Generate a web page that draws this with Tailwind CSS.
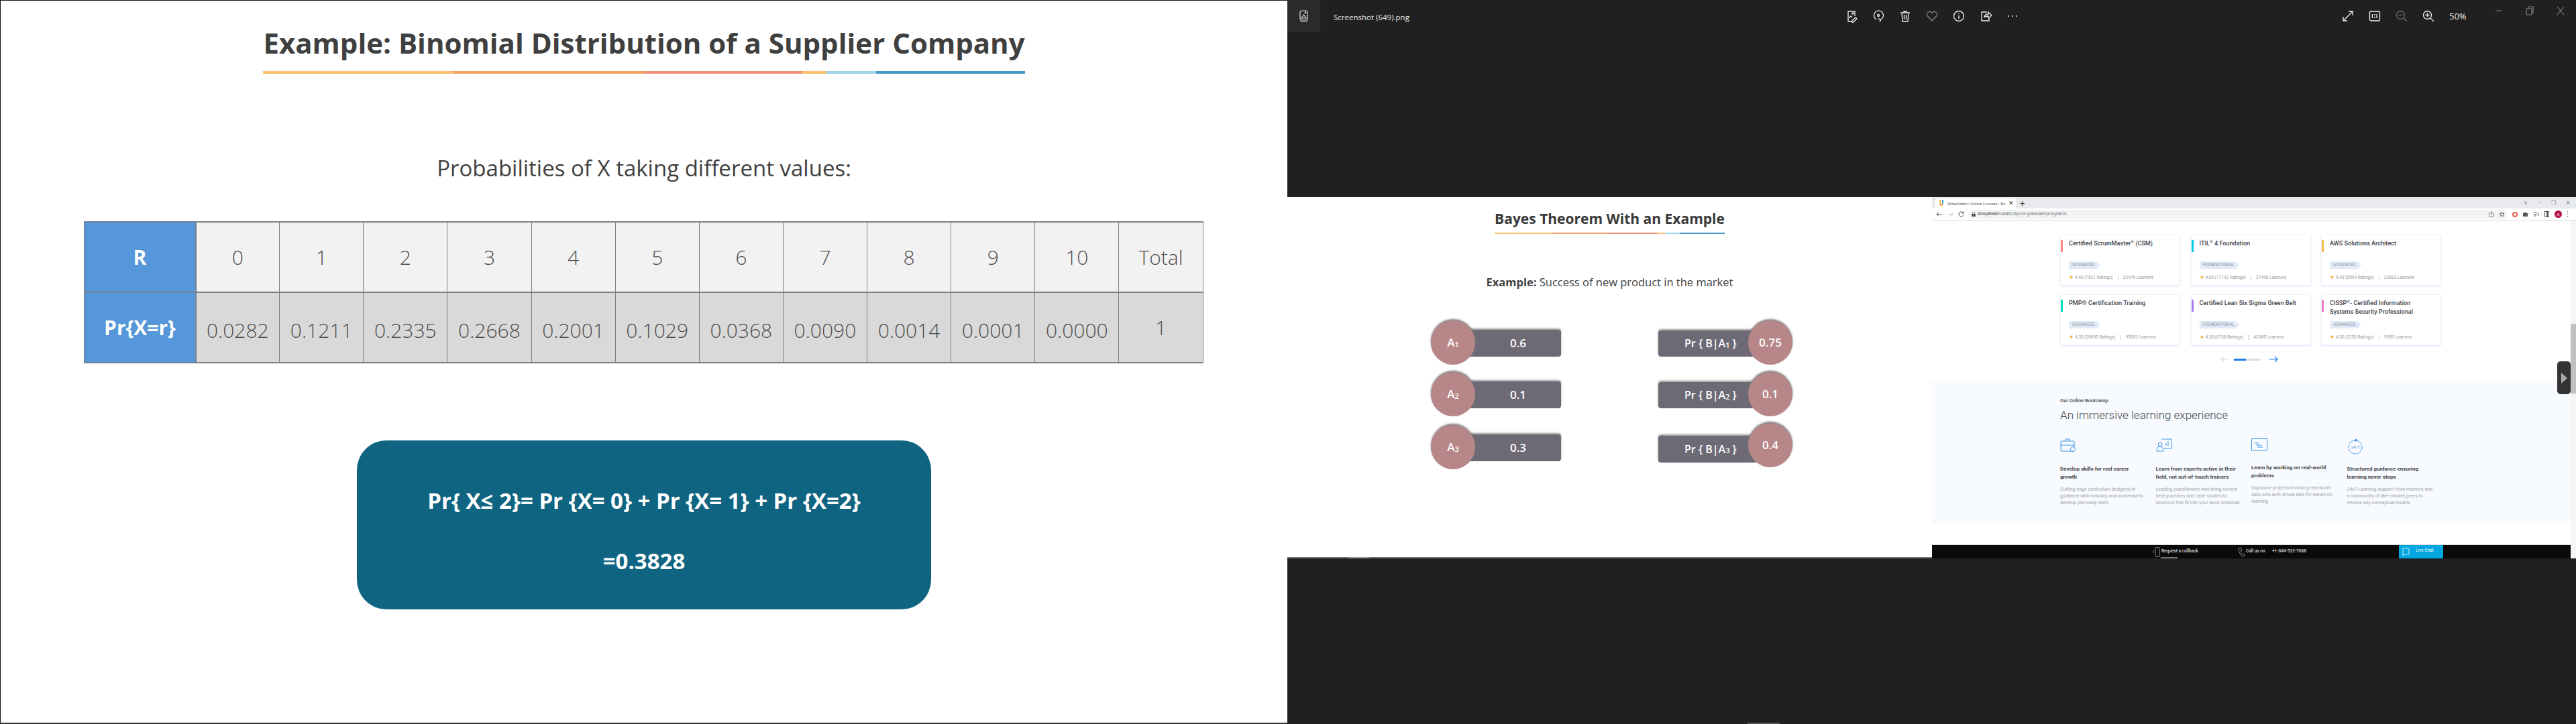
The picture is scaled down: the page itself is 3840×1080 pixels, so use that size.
<!DOCTYPE html>
<html lang="en">
<head>
<meta charset="UTF-8">
<title>Photos viewer</title>
<script src="https://cdn.jsdelivr.net/npm/@tailwindcss/browser@4"></script>
</head>
<body class="w-[3840px] h-[1080px] overflow-hidden flex bg-[#202020] font-['Open_Sans',sans-serif]">

<!-- Left slide -->
<div class="w-[1919px] h-[1080px] shrink-0 bg-white border-t border-l border-[#111] border-b-2 border-b-[#3a3a3a] flex flex-col items-center">
  <div class="mt-[35px] flex flex-col w-max">
    <h1 class="text-[42px] leading-[56px] font-bold text-[#3f3f3f] w-max">Example: Binomial Distribution of a Supplier Company</h1>
    <div class="mt-[14px] h-[4px] flex">
      <div class="w-[25%] bg-[#fdc06f]"></div><div class="w-[25%] bg-[#f6a066]"></div><div class="w-[20.8%] bg-[#f4917a]"></div><div class="w-[3.2%] bg-[#fdc06f]"></div><div class="w-[6.5%] bg-[#9ad3ea]"></div><div class="flex-1 bg-[#4696c8]"></div>
    </div>
  </div>
  <p class="mt-[118px] text-[33px] leading-[46px] text-[#404040] w-max">Probabilities of X taking different values:</p>
  <table class="mt-[56px] table-fixed border-collapse w-[1669px] ml-[-2px] text-[#4f4f4f] text-[30px] font-light text-center">
    <colgroup><col class="w-[166px]"></colgroup>
    <tr class="h-[105px] bg-[#f2f2f2]">
      <th class="bg-[#5597d8] text-white text-[30px] font-bold border-2 border-[#6f8296]">R</th>
      <td class="border-x border-[#7f7f7f] border-y-2">0</td><td class="border-x border-[#7f7f7f] border-y-2">1</td><td class="border-x border-[#7f7f7f] border-y-2">2</td><td class="border-x border-[#7f7f7f] border-y-2">3</td><td class="border-x border-[#7f7f7f] border-y-2">4</td><td class="border-x border-[#7f7f7f] border-y-2">5</td><td class="border-x border-[#7f7f7f] border-y-2">6</td><td class="border-x border-[#7f7f7f] border-y-2">7</td><td class="border-x border-[#7f7f7f] border-y-2">8</td><td class="border-x border-[#7f7f7f] border-y-2">9</td><td class="border-x border-[#7f7f7f] border-y-2">10</td><td class="border-x border-[#7f7f7f] border-y-2">Total</td>
    </tr>
    <tr class="h-[105px] bg-[#d9d9d9]">
      <th class="bg-[#5597d8] text-white text-[30px] font-bold border-2 border-[#6f8296]">Pr{X=r}</th>
      <td class="border-x border-[#7f7f7f] border-y-2 pt-[8px]">0.0282</td><td class="border-x border-[#7f7f7f] border-y-2 pt-[8px]">0.1211</td><td class="border-x border-[#7f7f7f] border-y-2 pt-[8px]">0.2335</td><td class="border-x border-[#7f7f7f] border-y-2 pt-[8px]">0.2668</td><td class="border-x border-[#7f7f7f] border-y-2 pt-[8px]">0.2001</td><td class="border-x border-[#7f7f7f] border-y-2 pt-[8px]">0.1029</td><td class="border-x border-[#7f7f7f] border-y-2 pt-[8px]">0.0368</td><td class="border-x border-[#7f7f7f] border-y-2 pt-[8px]">0.0090</td><td class="border-x border-[#7f7f7f] border-y-2 pt-[8px]">0.0014</td><td class="border-x border-[#7f7f7f] border-y-2 pt-[8px]">0.0001</td><td class="border-x border-[#7f7f7f] border-y-2 pt-[8px]">0.0000</td><td class="border-x border-[#7f7f7f] border-y-2">1</td>
    </tr>
  </table>
  <div class="mt-[115px] w-[856px] h-[252px] rounded-[44px] bg-[#0f6482] text-white font-bold text-[33px] flex flex-col items-center pt-[68px] gap-[46px] leading-[44px]">
    <p class="w-max">Pr{ X≤ 2}= Pr {X= 0} + Pr {X= 1} + Pr {X=2}</p>
    <p>=0.3828</p>
  </div>
</div>

<!-- Photos app -->
<div class="flex-1 flex flex-col min-w-0">
  <div class="h-[294px] shrink-0 text-white">
    <div class="h-[48px] flex items-start">
      <div class="w-[49px] h-[48px] shrink-0 bg-[#2b2b2b] flex items-center justify-center">
        <svg class="w-[18px] h-[20px]" viewBox="0 0 18 20" fill="none" stroke="#ddd" stroke-width="1.2"><rect x="3" y="2" width="11" height="14" rx="2"/><path d="M5 13l3.500-5 3.500 5zM3 18h11"/><circle cx="11" cy="5" r="0.8"/></svg>
      </div>
      <span class="ml-[20px] mt-[16px] w-[111px] shrink-0 whitespace-nowrap text-[11.500px] leading-[20px] text-[#e8e8e8]">Screenshot (649).png</span>
      <div class="ml-[651px] mt-[14px] flex gap-[20px] items-center shrink-0">
        <svg class="w-[20px] h-[20px]" viewBox="0 0 20 20" fill="none" stroke="#eee" stroke-width="1.300"><path d="M10 18H5V3h10v7"/><path d="M6 13l3-3 2 2M10 18l6-6 2 2-6 6z" /><circle cx="12" cy="6" r="1"/></svg>
        <svg class="w-[20px] h-[20px]" viewBox="0 0 20 20" fill="none" stroke="#eee" stroke-width="1.300"><path d="M7 15a7 7 0 1 1 7 0M12 19l2-4-4-1"/><circle cx="10" cy="9" r="1.500"/></svg>
        <svg class="w-[20px] h-[20px]" viewBox="0 0 20 20" fill="none" stroke="#eee" stroke-width="1.300"><path d="M3 5h14M8 5V3h4v2M5 5l1 13h8l1-13M8.500 8v7M11.500 8v7"/></svg>
        <svg class="w-[20px] h-[20px]" viewBox="0 0 20 20" fill="none" stroke="#888" stroke-width="1.300"><path d="M10 17L3 9.500a4 4 0 0 1 7-4 4 4 0 0 1 7 4z"/></svg>
        <svg class="w-[20px] h-[20px]" viewBox="0 0 20 20" fill="none" stroke="#eee" stroke-width="1.300"><circle cx="10" cy="10" r="7.500"/><path d="M10 9v5M10 6v1"/></svg>
        <svg class="w-[20px] h-[20px]" viewBox="0 0 20 20" fill="none" stroke="#eee" stroke-width="1.300"><path d="M12 4H4v13h11v-4M8 12c0-4 3-5 6-5V4l5 5-5 4v-3c-3 0-5 0-6 2z"/></svg>
        <svg class="w-[20px] h-[20px]" viewBox="0 0 20 20" fill="#eee"><circle cx="4" cy="10" r="1"/><circle cx="10" cy="10" r="1"/><circle cx="16" cy="10" r="1"/></svg>
      </div>
      <div class="ml-[480px] mt-[14px] flex gap-[20px] items-center shrink-0">
        <svg class="w-[20px] h-[20px]" viewBox="0 0 20 20" fill="none" stroke="#eee" stroke-width="1.300"><path d="M3 17L17 3M11 3h6v6M3 11v6h6"/></svg>
        <svg class="w-[20px] h-[20px]" viewBox="0 0 20 20" fill="none" stroke="#eee" stroke-width="1.300"><rect x="2.500" y="3" width="15" height="14" rx="2"/><path d="M6.500 7v6M13 7v6"/><circle cx="10" cy="8" r=".4"/><circle cx="10" cy="12" r=".4"/></svg>
        <svg class="w-[20px] h-[20px]" viewBox="0 0 20 20" fill="none" stroke="#666" stroke-width="1.300"><circle cx="8.500" cy="8.500" r="6"/><path d="M13 13l5 5M5.500 8.500h6"/></svg>
        <svg class="w-[20px] h-[20px]" viewBox="0 0 20 20" fill="none" stroke="#eee" stroke-width="1.300"><circle cx="8.500" cy="8.500" r="6"/><path d="M13 13l5 5M5.500 8.500h6M8.500 5.500v6"/></svg>
        <span class="ml-[1px] w-[26px] text-[13px] leading-[20px] text-[#e8e8e8]">50%</span>
      </div>
      <div class="ml-[40px] mt-[6px] flex gap-[30px] items-center shrink-0">
        <svg class="w-[16px] h-[20px]" viewBox="0 0 16 20" stroke="#777" stroke-width="1.100"><path d="M3 10h10"/></svg>
        <svg class="w-[16px] h-[20px]" viewBox="0 0 16 20" fill="none" stroke="#888" stroke-width="1.100"><path d="M3 7h8v9H3zM6 7V4h7v9h-2"/></svg>
        <svg class="w-[16px] h-[20px]" viewBox="0 0 16 20" fill="none" stroke="#888" stroke-width="1.100"><path d="M3 4l10 12M13 4L3 16"/></svg>
      </div>
    </div>
  </div>

  <div class="h-[539px] flex shrink-0">
    <!-- Bayes slide -->
    <div class="w-[961px] shrink-0 bg-white border-b-2 border-[#707070] flex flex-col items-center">
      <div class="mt-[18px] flex flex-col w-max">
        <h2 class="text-[21px] leading-[28px] font-bold text-[#3a3a3a] w-max">Bayes Theorem With an Example</h2>
        <div class="mt-[7px] h-[2px] flex">
          <div class="w-[25%] bg-[#fdc06f]"></div><div class="w-[25%] bg-[#f6a066]"></div><div class="w-[20.8%] bg-[#f4917a]"></div><div class="w-[3.2%] bg-[#fdc06f]"></div><div class="w-[6.5%] bg-[#9ad3ea]"></div><div class="flex-1 bg-[#4696c8]"></div>
        </div>
      </div>
      <p class="mt-[60px] text-[16.500px] leading-[24px] text-[#404040] w-max"><b>Example:</b> Success of new product in the market</p>
      <div class="mt-[45px] w-[539px] flex justify-between text-white font-semibold text-[17px] ml-[6px]">
        <div class="flex flex-col gap-[11px]">
          <div class="flex items-center h-[66px]"><span class="relative z-10 w-[66px] h-[66px] rounded-full bg-[#b78688] flex items-center justify-center shadow-[0_-2px_3px_#777]">A<sub class="text-[11px]">1</sub></span><span class="-ml-[8px] mt-[2px] w-[136px] h-[40px] rounded-r-[4px] bg-[#6e6a75] shadow-[0_-2px_3px_#999] pl-[8px] flex items-center justify-center">0.6</span></div>
          <div class="flex items-center h-[66px]"><span class="relative z-10 w-[66px] h-[66px] rounded-full bg-[#b78688] flex items-center justify-center shadow-[0_-2px_3px_#777]">A<sub class="text-[11px]">2</sub></span><span class="-ml-[8px] mt-[2px] w-[136px] h-[40px] rounded-r-[4px] bg-[#6e6a75] shadow-[0_-2px_3px_#999] pl-[8px] flex items-center justify-center">0.1</span></div>
          <div class="flex items-center h-[66px] mt-[2px]"><span class="relative z-10 w-[66px] h-[66px] rounded-full bg-[#b78688] flex items-center justify-center shadow-[0_-2px_3px_#777]">A<sub class="text-[11px]">3</sub></span><span class="-ml-[8px] mt-[2px] w-[136px] h-[40px] rounded-r-[4px] bg-[#6e6a75] shadow-[0_-2px_3px_#999] pl-[8px] flex items-center justify-center">0.3</span></div>
        </div>
        <div class="flex flex-col gap-[11px]">
          <div class="flex items-center h-[66px]"><span class="mt-[2px] w-[146px] h-[39px] rounded-l-[4px] bg-[#6e6a75] shadow-[0_-2px_3px_#999] pl-[39px] flex items-center whitespace-pre text-[16px]">Pr { B|A<sub class="text-[11px]">1</sub> }</span><span class="relative z-10 -ml-[12px] w-[66px] h-[66px] rounded-full bg-[#b78688] flex items-center justify-center shadow-[0_-2px_3px_#777]">0.75</span></div>
          <div class="flex items-center h-[66px]"><span class="mt-[2px] w-[146px] h-[39px] rounded-l-[4px] bg-[#6e6a75] shadow-[0_-2px_3px_#999] pl-[39px] flex items-center whitespace-pre text-[16px]">Pr { B|A<sub class="text-[11px]">2</sub> }</span><span class="relative z-10 -ml-[12px] w-[66px] h-[66px] rounded-full bg-[#b78688] flex items-center justify-center shadow-[0_-2px_3px_#777]">0.1</span></div>
          <div class="flex items-center h-[66px] -mt-[1px]"><span class="mt-[11px] w-[146px] h-[40px] rounded-l-[4px] bg-[#6e6a75] shadow-[0_-2px_3px_#999] pl-[39px] flex items-center whitespace-pre text-[16px]">Pr { B|A<sub class="text-[11px]">3</sub> }</span><span class="relative z-10 -ml-[12px] w-[66px] h-[66px] rounded-full bg-[#b78688] flex items-center justify-center shadow-[0_-2px_3px_#777]">0.4</span></div>
        </div>
      </div>
    </div>

    <!-- Browser screenshot -->
    <div class="flex-1 flex flex-col bg-white font-['Roboto',sans-serif] min-w-0">
      <div class="h-[17px] shrink-0 bg-[#e8eaed] flex items-end pl-[5px] text-[#5f6368]">
        <div class="w-[120px] h-[15px] bg-white rounded-t-[4px] flex items-center text-[6px] pl-[5px] gap-[5px]">
          <svg class="w-[8px] h-[11px] shrink-0" viewBox="0 0 8 11" fill="none" stroke-width="2"><path d="M2 0v6" stroke="#f4b740"/><path d="M6 0v6" stroke="#3aa0d8"/><path d="M2 6q2 4 4 0" stroke="#f08a3c"/></svg>
          <span class="w-max shrink-0 whitespace-nowrap">Simplilearn | Online Courses - Bo</span>
          <span class="text-[9px] text-[#333]">✕</span>
        </div>
        <span class="ml-[6px] text-[13px] leading-[15px] text-[#444]">+</span>
        <div class="ml-auto mb-[2px] mr-[8px] flex gap-[15px] text-[8px] leading-[12px] text-[#888]"><span>∨</span><span>–</span><span>❐</span><span>✕</span></div>
      </div>
      <div class="h-[18px] shrink-0 bg-white border-b border-[#dadce0] flex items-center pl-[6px] pr-[8px] text-[#5f6368]">
        <svg class="w-[9px] h-[9px]" viewBox="0 0 9 9" fill="none" stroke="#444" stroke-width="1"><path d="M8.500 4.500H1M4 1.500l-3 3 3 3"/></svg>
        <svg class="w-[9px] h-[9px] ml-[8px]" viewBox="0 0 9 9" fill="none" stroke="#bbb" stroke-width="1"><path d="M.5 4.500H8M5 1.500l3 3-3 3"/></svg>
        <svg class="w-[9px] h-[9px] ml-[7px]" viewBox="0 0 9 9" fill="none" stroke="#444" stroke-width="1"><path d="M7.500 2.500a3.500 3.500 0 1 0 .5 2.500M8 .5v2.500H5.500"/></svg>
        <div class="ml-[6px] w-[803px] h-[14px] rounded-full bg-[#f1f3f4] flex items-center pl-[5px] text-[7px]">
          <svg class="w-[6px] h-[7px]" viewBox="0 0 6 7" fill="#555"><rect y="3" width="6" height="4" rx=".5"/><path d="M1.500 3V2a1.500 1.500 0 0 1 3 0v1" fill="none" stroke="#555" stroke-width=".7"/></svg>
          <span class="ml-[3px] text-[#444]">simplilearn.com<span class="text-[#777]">/#post-graduate-programs</span></span>
          <svg class="w-[9px] h-[9px] ml-auto" viewBox="0 0 9 9" fill="none" stroke="#666" stroke-width=".8"><path d="M3 3H1.500v5.500h6V3H6M4.500 6V.5M3 2l1.500-1.500L6 2"/></svg>
          <svg class="w-[9px] h-[9px] ml-[7px] mr-[3px]" viewBox="0 0 9 9" fill="none" stroke="#555" stroke-width=".8"><path d="M4.500 1l1 2.400 2.600.2-2 1.700.6 2.500-2.200-1.300-2.200 1.300.6-2.500-2-1.700 2.600-.2z"/></svg>
        </div>
        <div class="ml-[8px] flex items-center gap-[7px]">
          <span class="w-[8px] h-[8px] rounded-full border-2 border-[#e8604c]"></span>
          <svg class="w-[9px] h-[9px]" viewBox="0 0 9 9" fill="#555"><path d="M1 3h2V1.500h2.500V3H8v5H1z"/></svg>
          <svg class="w-[9px] h-[9px]" viewBox="0 0 9 9" fill="none" stroke="#555" stroke-width="1"><path d="M1 2h5M1 4.500h5M1 7h3M7.500 2v5"/></svg>
          <svg class="w-[9px] h-[9px]" viewBox="0 0 9 9" fill="none" stroke="#555" stroke-width="1"><rect x="1.500" y=".5" width="6" height="8"/><path d="M5 .5v8" stroke-width="2"/></svg>
          <span class="w-[11px] h-[11px] rounded-full bg-[#b5124d] text-white text-[6px] leading-[11px] text-center">A</span>
          <svg class="w-[3px] h-[9px]" viewBox="0 0 3 9" fill="#555"><circle cx="1.500" cy="1" r=".8"/><circle cx="1.500" cy="4.500" r=".8"/><circle cx="1.500" cy="8" r=".8"/></svg>
        </div>
      </div>
      <div class="flex-1 flex min-h-0">
        <div class="flex-1 relative flex flex-col min-w-0">
          <div class="pl-[191px] pt-[21px] grid grid-cols-[179px_179px_179px] gap-x-[15.500px] gap-y-[13px]">
            <div class="h-[76px] bg-white rounded-[2px] border border-[#edf2fa] shadow-[0_1px_3px_#dbe6f6] relative pl-[12px] pt-[6px] flex flex-col">
              <span class="absolute left-0 top-[7px] w-[3px] h-[18px] bg-[#ff8a8a]"></span>
              <p class="text-[9.100px] leading-[13px] font-medium text-[#3d3f4a] w-max">Certified ScrumMaster<sup class="text-[6px]">®</sup> (CSM)</p>
              <span class="mt-auto w-[47px] h-[11px] bg-[#e1ebf7] [clip-path:polygon(0_0,88%_0,100%_50%,88%_100%,0_100%)] text-[6.500px] leading-[11px] pl-[5px] text-[#8b93a1]">ADVANCED</span>
              <p class="mt-[9px] mb-[7px] text-[6.500px] leading-[8px] text-[#999] flex items-center"><span class="text-[#f5b035] text-[8px] mr-[2px]">★</span>4.40 (7621 Ratings)<span class="mx-[7px] h-[7px] border-l border-[#ccc]"></span>32476 Learners</p>
            </div>
            <div class="h-[76px] bg-white rounded-[2px] border border-[#edf2fa] shadow-[0_1px_3px_#dbe6f6] relative pl-[12px] pt-[6px] flex flex-col">
              <span class="absolute left-0 top-[7px] w-[3px] h-[18px] bg-[#00c8e6]"></span>
              <p class="text-[9.100px] leading-[13px] font-medium text-[#3d3f4a]">ITIL<sup class="text-[6px]">®</sup> 4 Foundation</p>
              <span class="mt-auto w-[60px] h-[11px] bg-[#e1ebf7] [clip-path:polygon(0_0,90%_0,100%_50%,90%_100%,0_100%)] text-[6.500px] leading-[11px] pl-[5px] text-[#8b93a1]">FOUNDATIONAL</span>
              <p class="mt-[9px] mb-[7px] text-[6.500px] leading-[8px] text-[#999] flex items-center"><span class="text-[#f5b035] text-[8px] mr-[2px]">★</span>4.60 (17192 Ratings)<span class="mx-[7px] h-[7px] border-l border-[#ccc]"></span>21498 Learners</p>
            </div>
            <div class="h-[76px] bg-white rounded-[2px] border border-[#edf2fa] shadow-[0_1px_3px_#dbe6f6] relative pl-[12px] pt-[6px] flex flex-col">
              <span class="absolute left-0 top-[7px] w-[3px] h-[18px] bg-[#f5c04a]"></span>
              <p class="text-[9.100px] leading-[13px] font-medium text-[#3d3f4a]">AWS Solutions Architect</p>
              <span class="mt-auto w-[47px] h-[11px] bg-[#e1ebf7] [clip-path:polygon(0_0,88%_0,100%_50%,88%_100%,0_100%)] text-[6.500px] leading-[11px] pl-[5px] text-[#8b93a1]">ADVANCED</span>
              <p class="mt-[9px] mb-[7px] text-[6.500px] leading-[8px] text-[#999] flex items-center"><span class="text-[#f5b035] text-[8px] mr-[2px]">★</span>4.40 (5594 Ratings)<span class="mx-[7px] h-[7px] border-l border-[#ccc]"></span>23833 Learners</p>
            </div>
            <div class="h-[76px] bg-white rounded-[2px] border border-[#edf2fa] shadow-[0_1px_3px_#dbe6f6] relative pl-[12px] pt-[6px] flex flex-col">
              <span class="absolute left-0 top-[7px] w-[3px] h-[18px] bg-[#00dcb8]"></span>
              <p class="text-[9.100px] leading-[13px] font-medium text-[#3d3f4a]">PMP® Certification Training</p>
              <span class="mt-auto w-[47px] h-[11px] bg-[#e1ebf7] [clip-path:polygon(0_0,88%_0,100%_50%,88%_100%,0_100%)] text-[6.500px] leading-[11px] pl-[5px] text-[#8b93a1]">ADVANCED</span>
              <p class="mt-[9px] mb-[7px] text-[6.500px] leading-[8px] text-[#999] flex items-center"><span class="text-[#f5b035] text-[8px] mr-[2px]">★</span>4.30 (30895 Ratings)<span class="mx-[7px] h-[7px] border-l border-[#ccc]"></span>95382 Learners</p>
            </div>
            <div class="h-[76px] bg-white rounded-[2px] border border-[#edf2fa] shadow-[0_1px_3px_#dbe6f6] relative pl-[12px] pt-[6px] flex flex-col">
              <span class="absolute left-0 top-[7px] w-[3px] h-[18px] bg-[#a77cf0]"></span>
              <p class="text-[9.100px] leading-[13px] font-medium text-[#3d3f4a] w-max">Certified Lean Six Sigma Green Belt</p>
              <span class="mt-auto w-[60px] h-[11px] bg-[#e1ebf7] [clip-path:polygon(0_0,90%_0,100%_50%,90%_100%,0_100%)] text-[6.500px] leading-[11px] pl-[5px] text-[#8b93a1]">FOUNDATIONAL</span>
              <p class="mt-[9px] mb-[7px] text-[6.500px] leading-[8px] text-[#999] flex items-center"><span class="text-[#f5b035] text-[8px] mr-[2px]">★</span>4.30 (8738 Ratings)<span class="mx-[7px] h-[7px] border-l border-[#ccc]"></span>42345 Learners</p>
            </div>
            <div class="h-[76px] bg-white rounded-[2px] border border-[#edf2fa] shadow-[0_1px_3px_#dbe6f6] relative pl-[12px] pt-[6px] flex flex-col">
              <span class="absolute left-0 top-[7px] w-[3px] h-[18px] bg-[#ee7ccb]"></span>
              <p class="text-[9.100px] leading-[13px] font-medium text-[#3d3f4a]">CISSP<sup class="text-[6px]">®</sup>- Certified Information<br>Systems Security Professional</p>
              <span class="mt-auto w-[47px] h-[11px] bg-[#e1ebf7] [clip-path:polygon(0_0,88%_0,100%_50%,88%_100%,0_100%)] text-[6.500px] leading-[11px] pl-[5px] text-[#8b93a1]">ADVANCED</span>
              <p class="mt-[9px] mb-[7px] text-[6.500px] leading-[8px] text-[#999] flex items-center"><span class="text-[#f5b035] text-[8px] mr-[2px]">★</span>4.30 (3253 Ratings)<span class="mx-[7px] h-[7px] border-l border-[#ccc]"></span>9858 Learners</p>
            </div>
          </div>
          <div class="mt-[15px] h-[12px] pl-[430px] flex items-center">
            <svg class="w-[13px] h-[10px]" viewBox="0 0 13 10" fill="none" stroke="#c9dcf2" stroke-width="1.200"><path d="M13 5H1M5 1L1 5l4 4"/></svg>
            <div class="ml-[7px] w-[40px] h-[3px] bg-[#dcdcdc]"><div class="w-[18px] h-[3px] bg-[#1a7cf0]"></div></div>
            <svg class="w-[13px] h-[10px] ml-[13px]" viewBox="0 0 13 10" fill="none" stroke="#1a7cf0" stroke-width="1.200"><path d="M0 5h12M8 1l4 4-4 4"/></svg>
          </div>
          <div class="mt-[27px] h-[211px] bg-[#f7faff] pl-[191px] pt-[24px]">
            <p class="text-[7.500px] leading-[10px] font-medium text-[#444]">Our Online Bootcamp</p>
            <h3 class="mt-[5px] text-[17px] leading-[22px] font-light text-[#444] w-max">An immersive learning experience</h3>
            <div class="mt-[24px] grid grid-cols-[142.500px_142.500px_142.500px_142.500px]">
              <div>
                <svg class="w-[24px] h-[20px]" viewBox="0 0 24 20" fill="none" stroke="#3f94e8" stroke-width="1"><rect x="1" y="4" width="20" height="15" rx="1"/><path d="M8 4V1h6v3M1 10h20"/><circle cx="19" cy="16" r="3.500" fill="#f7faff"/></svg>
                <p class="mt-[20px] text-[8px] leading-[12px] font-bold text-[#444] w-max">Develop skills for real career<br>growth</p>
                <p class="mt-[7px] text-[7px] leading-[10px] text-[#a3a3a3] w-max">Cutting-edge curriculum designed in<br>guidance with industry and academia to<br>develop job-ready skills</p>
              </div>
              <div>
                <svg class="w-[24px] h-[20px]" viewBox="0 0 24 20" fill="none" stroke="#3f94e8" stroke-width="1"><path d="M8 1h15v14H12M15 11V7M18 11V4"/><circle cx="6" cy="9" r="3"/><path d="M1 19v-2a5 5 0 0 1 10 0v2z"/></svg>
                <p class="mt-[20px] text-[8px] leading-[12px] font-bold text-[#444] w-max">Learn from experts active in their<br>field, not out-of-touch trainers</p>
                <p class="mt-[7px] text-[7px] leading-[10px] text-[#a3a3a3] w-max">Leading practitioners who bring current<br>best practices and case studies to<br>sessions that fit into your work schedule.</p>
              </div>
              <div>
                <svg class="w-[24px] h-[18px] mb-[2px]" viewBox="0 0 24 18" fill="none" stroke="#3f94e8" stroke-width="1"><rect x=".5" y=".5" width="23" height="17"/><path d="M5 7h6M7 10h9M9 13h8"/></svg>
                <p class="mt-[20px] text-[8px] leading-[12px] font-bold text-[#444] w-max">Learn by working on real-world<br>problems</p>
                <p class="mt-[7px] text-[7px] leading-[10px] text-[#a3a3a3] w-max">Capstone projects involving real world<br>data sets with virtual labs for hands-on<br>learning</p>
              </div>
              <div>
                <svg class="w-[24px] h-[24px] -mb-[4px]" viewBox="0 0 24 24" fill="none" stroke="#3f94e8" stroke-width="1"><circle cx="12" cy="13" r="10" stroke-dasharray="4 1"/><path d="M10 3l4-2v3z" fill="#3f94e8"/><text x="12" y="15" text-anchor="middle" font-size="6" stroke="none" fill="#3f94e8">24/7</text></svg>
                <p class="mt-[20px] text-[8px] leading-[12px] font-bold text-[#444] w-max">Structured guidance ensuring<br>learning never stops</p>
                <p class="mt-[7px] text-[7px] leading-[10px] text-[#a3a3a3] w-max">24x7 Learning support from mentors and<br>a community of like-minded peers to<br>resolve any conceptual doubts</p>
              </div>
            </div>
          </div>
          <div class="mt-auto h-[21px] bg-[#0a0a0a] border-t border-[#ddd] flex items-center text-[6.500px] font-medium text-[#ddd]">
            <svg class="ml-[330px] w-[11px] h-[15px]" viewBox="0 0 11 15" fill="none" stroke="#aaa" stroke-width=".8"><rect x="3" y=".5" width="6" height="14" rx="1"/><path d="M1 5L0 7l1 2"/></svg>
            <span class="ml-[1px] w-[55px] whitespace-nowrap">Request a callback</span>
            <svg class="ml-[59px] w-[11px] h-[15px]" viewBox="0 0 11 15" fill="none" stroke="#aaa" stroke-width=".8"><path d="M1 2l3-1 2 4-2 1q0 3 3 5l2-1 1 3-3 1Q1 10 1 2z"/></svg>
            <span class="ml-[1px] w-[29px] whitespace-nowrap">Call us on</span>
            <span class="ml-[10px] w-[51px] whitespace-nowrap">+1-844-532-7688</span>
            <div class="ml-[138px] w-[66px] h-full bg-[#00a6e0] flex items-center pl-[5px] text-white font-normal">
              <svg class="w-[11px] h-[13px] mr-[9px]" viewBox="0 0 11 13" fill="none" stroke="#cfeefb" stroke-width="1"><path d="M1 1h9v9H4l-3 2z"/></svg>
              <span class="-mt-[2px]">Live Chat</span>
            </div>
          </div>
          <div class="absolute right-0 top-[210px] w-[20px] h-[49px] bg-[#333] rounded-[5px] flex items-center justify-center">
            <span class="w-0 h-0 border-y-[8px] border-y-transparent border-l-[9px] border-l-[#aaa]"></span>
          </div>
        </div>
        <div class="w-[8px] shrink-0 bg-[#f5f5f5] relative flex flex-col">
          <div class="mt-[154px] h-[104px] bg-[#c1c1c1]"></div>
        </div>
      </div>
    </div>
  </div>
  <div class="h-[2px] -mt-[2px] relative flex">
    <div class="ml-[91px] w-[31px] bg-[#999]"></div>
    <div class="ml-[1180px] w-[25px] bg-[#777]"></div>
  </div>
  <div class="mt-auto h-[2px] flex"><div class="ml-[686px] w-[48px] bg-[#555]"></div></div>
</div>
</body>
</html>
